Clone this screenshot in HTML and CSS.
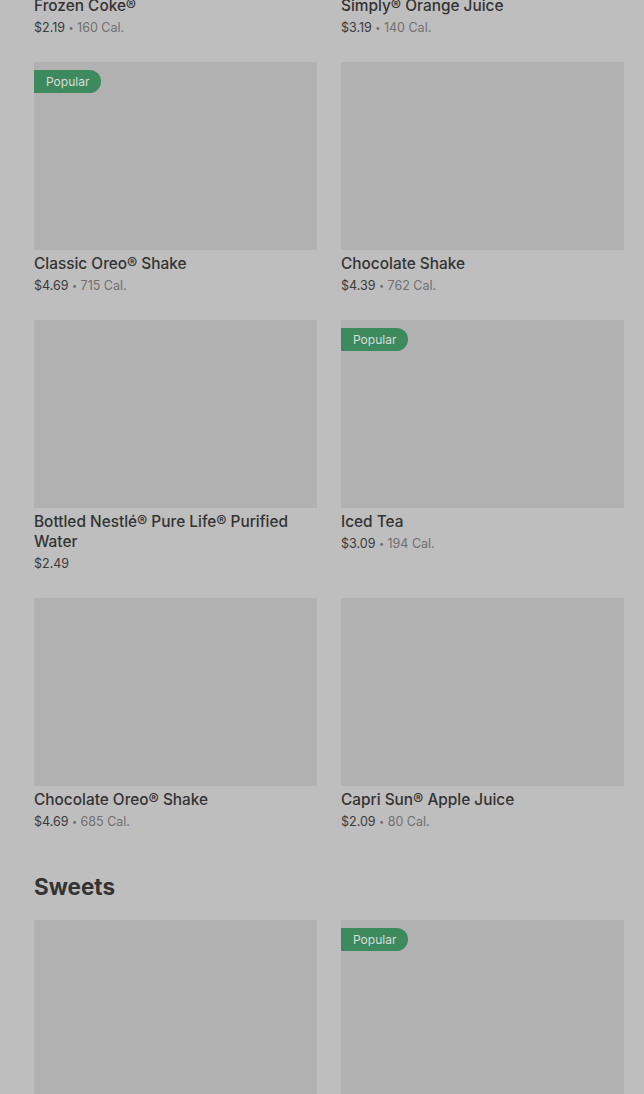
FILE: index.html
```html
<!DOCTYPE html>
<html lang="en">
<head>
<meta charset="utf-8">
<link rel="stylesheet" href="styles.css">
</head>
<body>
<main class="page">
  <section class="section">
    <div class="grid">
      <article class="card">
        <div class="thumb"></div>
        <div class="info">
          <h3 class="title">Frozen Coke®</h3>
          <p class="meta"><span class="price">$2.19</span> <span class="dot">•</span> <span class="cal">160 Cal.</span></p>
        </div>
      </article>
      <article class="card">
        <div class="thumb"></div>
        <div class="info">
          <h3 class="title">Simply® Orange Juice</h3>
          <p class="meta"><span class="price">$3.19</span> <span class="dot">•</span> <span class="cal">140 Cal.</span></p>
        </div>
      </article>
      <article class="card">
        <div class="thumb"><span class="badge">Popular</span></div>
        <div class="info">
          <h3 class="title">Classic Oreo® Shake</h3>
          <p class="meta"><span class="price">$4.69</span> <span class="dot">•</span> <span class="cal">715 Cal.</span></p>
        </div>
      </article>
      <article class="card">
        <div class="thumb"></div>
        <div class="info">
          <h3 class="title">Chocolate Shake</h3>
          <p class="meta"><span class="price">$4.39</span> <span class="dot">•</span> <span class="cal">762 Cal.</span></p>
        </div>
      </article>
      <article class="card">
        <div class="thumb"></div>
        <div class="info">
          <h3 class="title">Bottled Nestlé® Pure Life® Purified Water</h3>
          <p class="meta"><span class="price">$2.49</span></p>
        </div>
      </article>
      <article class="card">
        <div class="thumb"><span class="badge">Popular</span></div>
        <div class="info">
          <h3 class="title">Iced Tea</h3>
          <p class="meta"><span class="price">$3.09</span> <span class="dot">•</span> <span class="cal">194 Cal.</span></p>
        </div>
      </article>
      <article class="card">
        <div class="thumb"></div>
        <div class="info">
          <h3 class="title">Chocolate Oreo® Shake</h3>
          <p class="meta"><span class="price">$4.69</span> <span class="dot">•</span> <span class="cal">685 Cal.</span></p>
        </div>
      </article>
      <article class="card">
        <div class="thumb"></div>
        <div class="info">
          <h3 class="title">Capri Sun® Apple Juice</h3>
          <p class="meta"><span class="price">$2.09</span> <span class="dot">•</span> <span class="cal">80 Cal.</span></p>
        </div>
      </article>
    </div>
  </section>
  <section class="section">
    <h2 class="heading">Sweets</h2>
    <div class="grid">
      <article class="card">
        <div class="thumb"></div>
      </article>
      <article class="card">
        <div class="thumb"><span class="badge">Popular</span></div>
      </article>
    </div>
  </section>
</main>
</body>
</html>
```
FILE: styles.css
```css
* { box-sizing: border-box; }
html, body {
  margin: 0;
  padding: 0;
  background: #bebebe;
  overflow: hidden;
}
body {
  font-family: Inter, "Liberation Sans", sans-serif;
  color: #333333;
}
.page {
  margin-top: -196px;
  padding: 0 20px 0 34px;
}
.grid {
  display: grid;
  grid-template-columns: 1fr 1fr;
  column-gap: 24px;
  row-gap: 24px;
}
.thumb {
  position: relative;
  height: 188px;
  background: #b1b1b1;
}
.badge {
  position: absolute;
  top: 8px;
  left: 0;
  height: 23px;
  padding: 0 12px;
  display: flex;
  align-items: center;
  background: #3c8a5e;
  color: #dcdcdc;
  font-size: 12px;
  border-radius: 0 12px 12px 0;
}
.info {
  padding-top: 4px;
}
.title {
  margin: 0;
  font-size: 15.4px;
  line-height: 20px;
  font-weight: 500;
  color: #333333;
}
.meta {
  margin: 2px 0 0;
  font-size: 12.5px;
  line-height: 20px;
  color: #6e6e6e;
}
.dot {
  font-size: 9px;
  vertical-align: 1px;
}
.price {
  color: #3a3a3a;
}
.cal {
  color: #707070;
}
.heading {
  margin: 39px 0 17px;
  font-size: 22.5px;
  line-height: 32px;
  font-weight: 700;
  color: #333333;
}
```
